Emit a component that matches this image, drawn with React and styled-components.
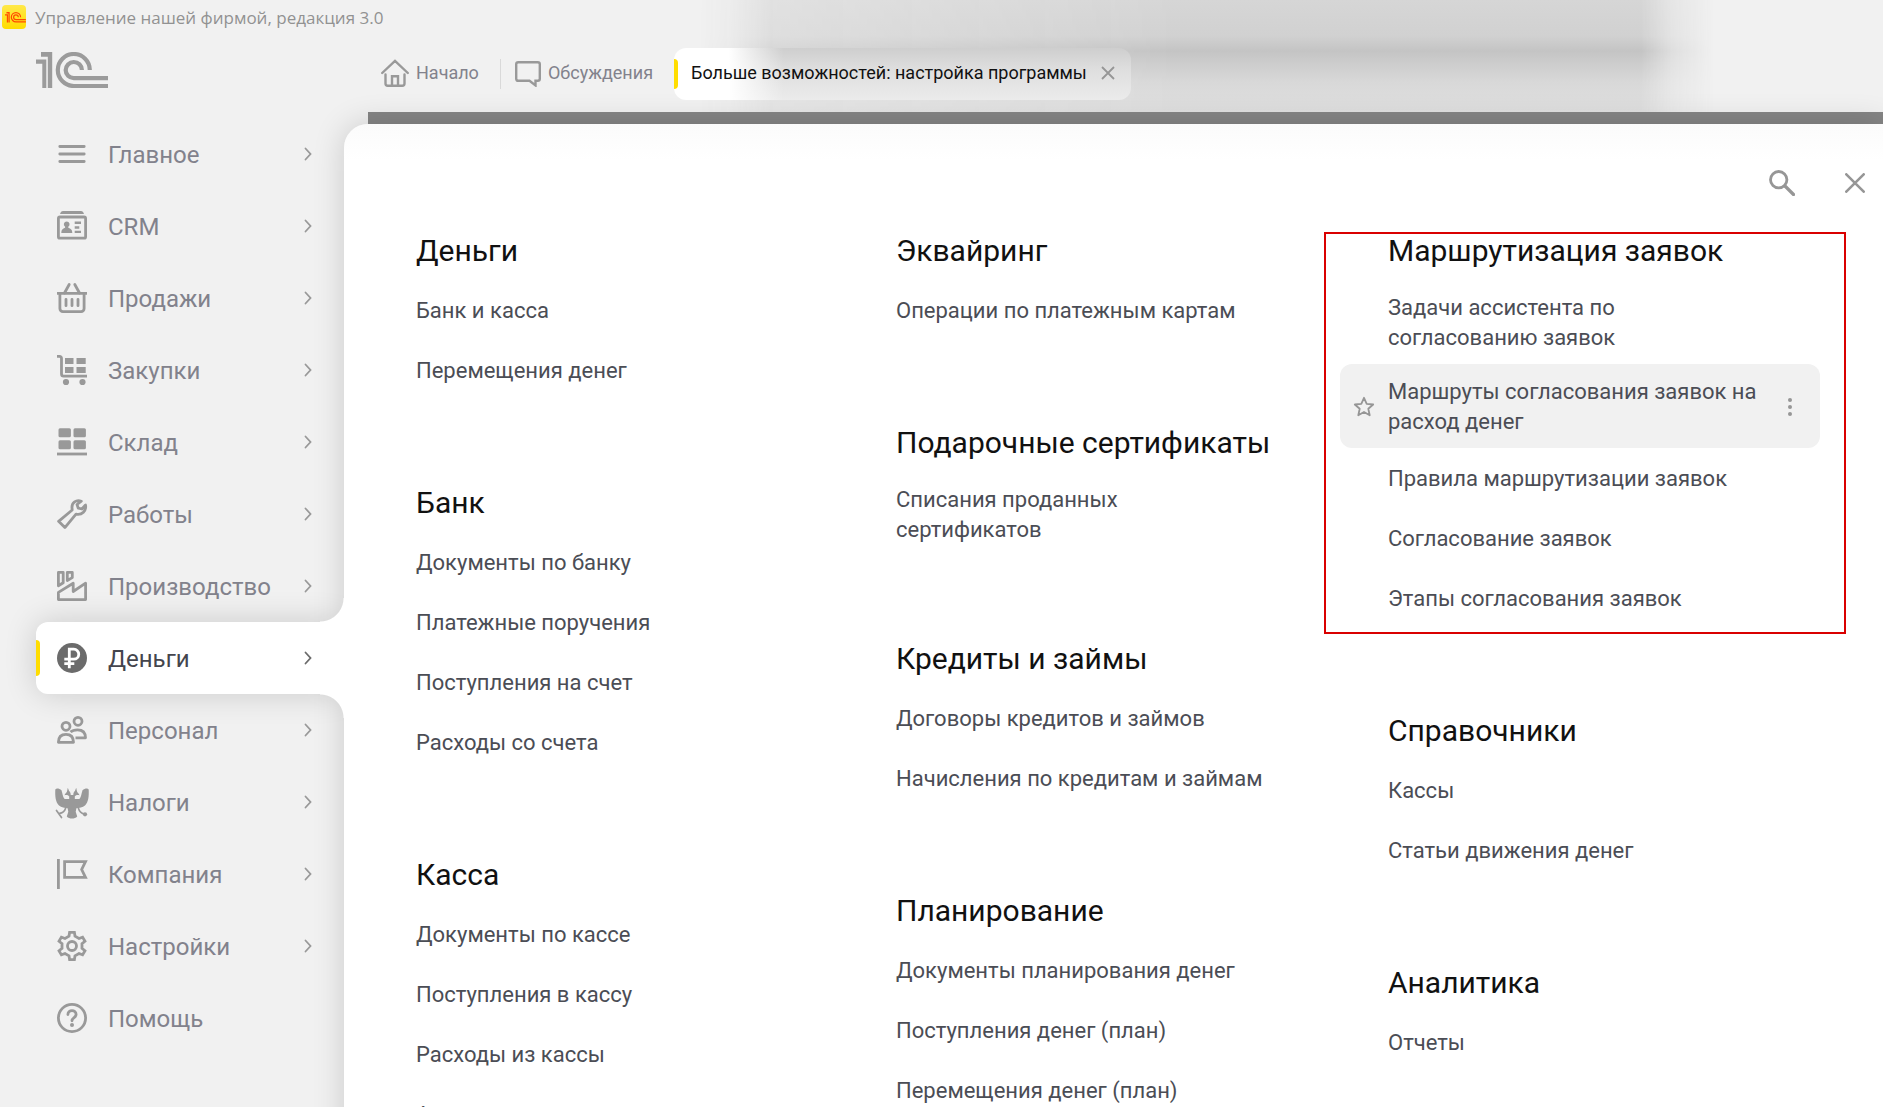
import React from 'react'
import styled, { createGlobalStyle, css } from 'styled-components'

const sections = [
    { title: 'Главное', icon: 'menu' },
    { title: 'CRM', icon: 'crm' },
    { title: 'Продажи', icon: 'basket' },
    { title: 'Закупки', icon: 'cart' },
    { title: 'Склад', icon: 'stock' },
    { title: 'Работы', icon: 'wrench' },
    { title: 'Производство', icon: 'factory' },
    { title: 'Деньги', icon: 'money', active: true },
    { title: 'Персонал', icon: 'people' },
    { title: 'Налоги', icon: 'eagle' },
    { title: 'Компания', icon: 'flag' },
    { title: 'Настройки', icon: 'gear' },
    { title: 'Помощь', icon: 'help', leaf: true },
]

const columns = [
    [
        { title: 'Деньги', items: ['Банк и касса', 'Перемещения денег'] },
        { title: 'Банк', items: ['Документы по банку', 'Платежные поручения', 'Поступления на счет', 'Расходы со счета'] },
        { title: 'Касса', items: ['Документы по кассе', 'Поступления в кассу', 'Расходы из кассы', 'Авансовые отчеты'] },
    ],
    [
        { title: 'Эквайринг', items: ['Операции по платежным картам'] },
        { title: 'Подарочные сертификаты', items: ['Списания проданных сертификатов'] },
        { title: 'Кредиты и займы', items: ['Договоры кредитов и займов', 'Начисления по кредитам и займам'] },
        { title: 'Планирование', items: ['Документы планирования денег', 'Поступления денег (план)', 'Перемещения денег (план)'] },
    ],
    [
        {
            title: 'Маршрутизация заявок',
            marked: true,
            current: 1,
            items: [
                'Задачи ассистента по согласованию заявок',
                'Маршруты согласования заявок на расход денег',
                'Правила маршрутизации заявок',
                'Согласование заявок',
                'Этапы согласования заявок',
            ],
        },
        { title: 'Справочники', items: ['Кассы', 'Статьи движения денег'] },
        { title: 'Аналитика', items: ['Отчеты'] },
    ],
]

// six-tooth cog around (15, 15)
function cogPath() {
    const pts = []
    for (let i = 0; i < 6; i++) {
        const a = (i * Math.PI) / 3
        const tooth = [[-3, 9.8], [-2.4, 13.6], [2.4, 13.6], [3, 9.8]]
        tooth.forEach(([x, r]) => {
            const px = 15 + x * Math.cos(a) + r * Math.sin(a)
            const py = 15 + x * Math.sin(a) - r * Math.cos(a)
            pts.push(`${px.toFixed(2)} ${py.toFixed(2)}`)
        })
    }
    return `M${pts.join('L')}Z`
}

const icons = {
    menu: <path d="M2.8 7.5h24.4M2.8 15h24.4M2.8 22.5h24.4" strokeLinecap="round" />,
    crm: (
        <>
            <path d="M3 3c.6-2 1.5-3 3-3h18c1.5 0 2.4 1 3 3z" className="fill" />
            <rect x="1.4" y="6" width="27.2" height="21.2" rx="1.5" />
            <path d="M9.7 10.5a2.9 2.9 0 0 1 1.6 5.3v1c2.5.7 4 1.9 4 5.2h-11c0-3.3 1.4-4.5 3.8-5.2v-1a2.9 2.9 0 0 1 1.6-5.3zM17.7 10.5H24V13h-6.300zM17.7 15.2h4.6v2.5h-4.6zM17.7 19.7H24v2.4h-6.3z" className="fill" />
        </>
    ),
    basket: (
        <>
            <path d="M0 10.4h30M2.9 10.4v15.2a3 3 0 0 0 3 3h18.2a3 3 0 0 0 3-3V10.4" />
            <path d="M7.5 10l4.7-8.5M22.5 10l-4.7-8.5M9 16.3v6.4M15 16.3v6.4M21 16.3v6.4" strokeLinecap="round" />
        </>
    ),
    cart: (
        <>
            <path d="M0 1.4h2.5q2 0 2 2V19q0 2.2 2.2 2.2H30" />
            <path d="M8 3h8.5v6H8zM19.5 3h9.2v6h-9.2zM8 12h8.5v6H8zM19.5 12h9.2v6h-9.2z" className="fill" />
            <circle cx="9" cy="27" r="3.1" className="fill" />
            <circle cx="25.5" cy="27" r="3.1" className="fill" />
        </>
    ),
    stock: (
        <>
            <g className="fill">
                <rect x="1.5" y="1.2" width="12.4" height="9" rx="1.5" />
                <rect x="16.5" y="1.2" width="12.4" height="9" rx="1.5" />
                <rect x="1.5" y="13.3" width="12.4" height="9" rx="1.5" />
                <rect x="16.5" y="13.3" width="12.4" height="9" rx="1.5" />
            </g>
            <path d="M0 27h30" />
        </>
    ),
    wrench: <path d="M24.3 2.2c-5-2-9.8 1.4-9.3 6.8l.2 2L1.6 22.3l6.3 6.3L19 15.2c6 1.3 10.6-3.6 9.5-9.2l-3.6 4-3.6-.8-1.3-3.7z" strokeLinejoin="round" />,
    factory: (
        <path
            d="M1.4 1.4h4.8v10.4l-4.8 3zM10.3 1.4h5v5.2l-5 2.9zM1.4 28.6v-7.2l14.8-9.1v8.2l12.4-8.3v16.4z"
            strokeLinejoin="round"
        />
    ),
    money: (
        <>
            <circle cx="15" cy="15" r="15" className="fill" />
            <path d="M12.3 25.3V6.200h4.5a4.9 4.9 0 0 1 0 9.9H7.3M7.3 20.6h10" stroke="#fff" />
        </>
    ),
    people: (
        <>
            <circle cx="9" cy="11.3" r="4" />
            <circle cx="21" cy="6.3" r="4" />
            <path d="M1.4 27.3c0-5.3 3-8 7.600-8s7.5 2.7 7.5 8z" strokeLinejoin="round" />
            <path d="M13.5 17c1.6-1.5 4-2.2 7-2.2 5 0 8 2.7 8 8h-10" strokeLinejoin="round" />
        </>
    ),
    eagle: (
        <>
            <path
                className="fill"
                d="M-1.7 2.5C-.5.8 2.500 1.7 4.5 3.200 5.8 7 5.6 10 7.6 12h4.6V9.500C11 8 9.8 8 7.5 8.200c.7-1.7 1.8-2.4 2.5-3.7L10.8.8l1.2 3c1.3 1.2 1.700 2.7 1.7 4.2h2.6c0-1.5.4-3 1.7-4.2l1.2-3 .8 3.700c.7 1.3 1.8 2 2.5 3.7-2.3-.2-3.5-.2-4.7 1.3V12h4.6c2-2 1.8-5 3.1-8.8 2-1.5 5-2.4 6.2-.7C32 9 31.6 15 28 18.500c-2.4 2.3-5.8 2.3-8.6 2.8l-.7 3.4 1.5 4.7c-2.4 2.8-8 2.8-10.4 0l1.5-4.7-.7-3.4c-2.8-.5-6.2-.5-8.6-2.8C-1.6 15-2 9-1.7 2.500z"
            />
            <path d="M-.5 23.5l5 7M8.5 21.5c-.8 2.5-2 4.5-6 4.8M21.5 21.5c.8 2.5 2 4.800 5.5 5.5" strokeWidth="1.7" strokeLinecap="round" />
            <circle cx="28" cy="27.3" r="2.1" className="fill" />
        </>
    ),
    flag: <path d="M1.4 0v30M7.6 2.7h20.9l-3.8 7.8 3.8 7.8H7.6z" />,
    gear: (
        <>
            <path d={cogPath()} />
            <circle cx="15" cy="15" r="4.5" />
        </>
    ),
    help: (
        <>
            <circle cx="15" cy="15" r="13.6" />
            <path d="M10.9 11.6c0-5.3 8.2-5.3 8.2 0 0 3-4.1 3-4.1 6.200" strokeLinecap="round" />
            <circle cx="15" cy="22" r="2" className="fill" />
        </>
    ),
}

function Mark1C() {
    return (
        <>
            <path d="M5 0h11.2v36h-4.4V4.8H5zM0 7.400h10.3V36h-4V11.8H0z" fill="currentColor" />
            <path d="M53.8 18a16 16 0 1 0-16 16H72M45.9 18a8.1 8.1 0 1 0-8.1 8.200H72" fill="none" stroke="currentColor" strokeWidth="4.2" />
        </>
    )
}

function Section({ title, items, marked, current }) {
    return (
        <Group $marked={marked}>
            <GroupTitle>{title}</GroupTitle>
            {items.map((item, i) => (
                <Command key={item} $current={i === current}>
                    {i === current && (
                        <StarButton type="button" aria-label="Добавить в избранное">
                            <svg width="22" height="22" viewBox="0 0 22 22">
                                <path d="M11 1.8l2.7 6 6.5.7-4.9 4.3 1.4 6.5L11 16l-5.7 3.3 1.4-6.5L1.8 8.500l6.5-.7z" fill="none" stroke="currentColor" strokeWidth="1.8" strokeLinejoin="round" />
                            </svg>
                        </StarButton>
                    )}
                    <CommandLink href="#">{item}</CommandLink>
                    {i === current && (
                        <DotsButton type="button" aria-label="Ещё">
                            <svg width="4" height="18" viewBox="0 0 4 18">
                                <g fill="currentColor">
                                    <circle cx="2" cy="2" r="2" />
                                    <circle cx="2" cy="9" r="2" />
                                    <circle cx="2" cy="16" r="2" />
                                </g>
                            </svg>
                        </DotsButton>
                    )}
                </Command>
            ))}
        </Group>
    )
}

export default function App() {
    return (
        <>
            <GlobalStyle />
            <Window>
                <TitleBar>
                    <AppBadge width="24" height="24" viewBox="0 0 24 24">
                        <defs>
                            <linearGradient id="badge" x1="0" y1="0" x2="0" y2="1">
                                <stop offset="0" stopColor="#ffe84a" />
                                <stop offset="1" stopColor="#ffdc00" />
                            </linearGradient>
                        </defs>
                        <rect width="24" height="24" rx="4" fill="url(#badge)" />
                        <g transform="translate(3 7) scale(.29)" strokeWidth="5">
                            <Mark1C />
                        </g>
                    </AppBadge>
                    Управление нашей фирмой, редакция 3.0
                </TitleBar>
                <Body>
                    <Sidebar>
                        <Logo width="72" height="36" viewBox="0 0 72 36">
                            <Mark1C />
                        </Logo>
                        <nav>
                            {sections.map(({ title, icon, active, leaf }) => (
                                <NavItem key={title} href="#" $active={active}>
                                    <NavIcon width="30" height="30" viewBox="0 0 30 30">{icons[icon]}</NavIcon>
                                    <NavLabel>{title}</NavLabel>
                                    {!leaf && (
                                        <svg width="10" height="16" viewBox="0 0 10 16">
                                            <path d="M2.5 2.5l5 5.5-5 5.5" fill="none" stroke="currentColor" strokeWidth="1.8" strokeLinecap="round" />
                                        </svg>
                                    )}
                                </NavItem>
                            ))}
                        </nav>
                    </Sidebar>
                    <Main>
                        <Tabs>
                            <Tab href="#">
                                <svg width="28" height="28" viewBox="0 0 28 28" fill="none" stroke="#999" strokeWidth="2.4">
                                    <path d="M1.2 14L14 1.8 26.8 14M4.500 15.5v9q0 2.200 2.2 2.2h14.6q2.200 0 2.2-2.2v-9M11 26.500v-9.300h6v9.3" strokeLinecap="round" />
                                </svg>
                                Начало
                            </Tab>
                            <Divider />
                            <Tab href="#">
                                <svg width="26" height="28" viewBox="0 0 26 28" fill="none" stroke="#999" strokeWidth="2.4">
                                    <path d="M3.2 3.200h19.6q2 0 2 2v14.6q0 2-2 2h-2.3v4.600l-6-4.600H3.200q-2 0-2-2V5.200q0-2 2-2z" />
                                </svg>
                                Обсуждения
                            </Tab>
                            <ActiveTab>
                                Больше возможностей: настройка программы
                                <IconButton type="button" aria-label="Закрыть вкладку">
                                    <svg width="14" height="14" viewBox="0 0 14 14">
                                        <path d="M1 1l12 12M13 1L1 13" stroke="currentColor" strokeWidth="1.8" />
                                    </svg>
                                </IconButton>
                            </ActiveTab>
                        </Tabs>
                        <Workspace>
                            <Panel>
                                <PanelTools>
                                    <IconButton type="button" aria-label="Поиск">
                                        <svg width="26" height="26" viewBox="0 0 26 26" fill="none" stroke="currentColor" strokeWidth="2.8">
                                            <circle cx="9.7" cy="9.7" r="8.2" />
                                            <path d="M16 16l8.5 8.5" strokeLinecap="round" strokeWidth="3.2" />
                                        </svg>
                                    </IconButton>
                                    <IconButton type="button" aria-label="Закрыть">
                                        <svg width="20" height="20" viewBox="0 0 20 20">
                                            <path d="M1.3 1.3l17.4 17.4M18.7 1.3L1.3 18.7" stroke="currentColor" strokeWidth="2.600" strokeLinecap="round" />
                                        </svg>
                                    </IconButton>
                                </PanelTools>
                                <Columns>
                                    {columns.map((groups, i) => (
                                        <Column key={i}>
                                            {groups.map(group => <Section key={group.title} {...group} />)}
                                        </Column>
                                    ))}
                                </Columns>
                            </Panel>
                        </Workspace>
                    </Main>
                </Body>
            </Window>
        </>
    )
}

const GlobalStyle = createGlobalStyle`
    * {
        box-sizing: border-box;
    }

    body {
        margin: 0;
        background: #f1f1f1;
        font-family: Roboto, "Liberation Sans", sans-serif;
    }

    a {
        color: inherit;
        text-decoration: none;
    }

    svg {
        display: block;
        flex: none;
    }
`

const Window = styled.div`
    display: flex;
    flex-direction: column;
    height: 100vh;
    overflow: hidden;
    position: relative;
    isolation: isolate;

    /* blurred backdrop showing through the window header */
    &::before {
        content: "";
        position: absolute;
        z-index: -1;
        top: 0;
        left: 36%;
        right: 9%;
        height: 112px;
        background: linear-gradient(180deg, #d6d6d6 0, #d1d1d1 36px, #c4c4c4 51px, #cdcdcd 64px, #d8d8d8 82px, #e0e0e0 112px);
        mask-image: linear-gradient(90deg, transparent 2%, rgba(0, 0, 0, .15) 5%, rgba(0, 0, 0, .6) 9%, rgba(0, 0, 0, .75) 24%, #000 48%, #000 93%, rgba(0, 0, 0, .4) 96%, transparent);
    }
`

const TitleBar = styled.header`
    display: flex;
    align-items: center;
    gap: 9px;
    height: 36px;
    padding: 0 0 2px 2px;
    color: #929292;
    font: 17px "Open Sans", "Noto Sans", sans-serif;
`

const AppBadge = styled.svg`
    color: #ff4a00;
`

const Body = styled.div`
    display: grid;
    grid-template-columns: 344px 1fr;
    flex: 1;
    min-height: 0;
`

const Sidebar = styled.aside`
    position: relative;
    z-index: 1;
    padding: 16px 0 0 36px;
`

const Logo = styled.svg`
    margin-bottom: 30px;
    color: #9b9b9b;
`

const NavItem = styled.a`
    position: relative;
    display: flex;
    align-items: center;
    height: 72px;
    padding: 0 31px 0 21px;
    border-radius: 12px 0 0 12px;
    color: #999;

    ${({ $active }) => $active && css`
        background: #fff;
        color: #6b6b6b;
        box-shadow: 0 0 32px rgba(0, 0, 0, .16);
        clip-path: inset(-48px 0 -48px -36px);

        span {
            color: #44454d;
        }

        &::before {
            content: "";
            position: absolute;
            left: 0;
            top: 18px;
            bottom: 18px;
            width: 4px;
            border-radius: 0 4px 4px 0;
            background: #ffdd00;
        }

        /* inverse corners that join the row with the panel */
        &::after {
            content: "";
            position: absolute;
            right: 0;
            top: -24px;
            bottom: -24px;
            width: 24px;
            background:
                radial-gradient(circle at 0 0, transparent 23px, #fff 24px) top / 24px 24px no-repeat,
                radial-gradient(circle at 0 100%, transparent 23px, #fff 24px) bottom / 24px 24px no-repeat;
        }
    `}
`

const NavIcon = styled.svg`
    overflow: visible;
    fill: none;
    stroke: currentColor;
    stroke-width: 2.8;

    .fill {
        fill: currentColor;
        stroke: none;
    }
`

const NavLabel = styled.span`
    flex: 1;
    padding: 2px 0 0 21px;
    color: #82828c;
    font-size: 24px;
`

const Main = styled.main`
    display: flex;
    flex-direction: column;
    min-width: 0;
`

const Tabs = styled.div`
    display: flex;
    align-items: center;
    height: 76px;
    padding-left: 37px;
    white-space: nowrap;
    font-size: 18px;
`

const Tab = styled.a`
    display: flex;
    align-items: center;
    gap: 7px;
    padding-bottom: 3px;
    color: #82828c;
`

const Divider = styled.span`
    width: 1px;
    height: 30px;
    margin: 0 14px 0 21px;
    background: #d9d9d9;
`

const ActiveTab = styled.div`
    position: relative;
    display: flex;
    align-items: center;
    gap: 14px;
    height: 52px;
    margin-left: 21px;
    padding: 0 16px 3px 17px;
    border-radius: 12px;
    background:
        linear-gradient(90deg, #fff 12%, rgba(255, 255, 255, 0) 24%),
        linear-gradient(180deg, #cecece, #dedede 40%, #ebebeb);
    color: #111;

    &::before {
        content: "";
        position: absolute;
        left: 0;
        top: 11px;
        bottom: 11px;
        width: 4px;
        border-radius: 0 4px 4px 0;
        background: #ffdd00;
    }
`

const IconButton = styled.button`
    padding: 0;
    border: 0;
    background: none;
    color: #969696;
`

const Workspace = styled.div`
    display: flex;
    flex: 1;
    min-height: 0;
    margin-left: 24px;
    padding-top: 12px;
    background: #858585;
`

const Panel = styled.section`
    flex: 1;
    margin-left: -24px;
    border-radius: 24px 0 0 0;
    background: linear-gradient(180deg, #fbfbfb, #fff 36px);
    box-shadow: 0 0 32px rgba(0, 0, 0, .16);
`

const PanelTools = styled.div`
    display: flex;
    justify-content: flex-end;
    align-items: center;
    gap: 50px;
    height: 96px;
    padding: 22px 18px 0 0;
`

const Columns = styled.div`
    display: grid;
    grid-template-columns: 40fr 41fr 40fr;
    padding: 0 63px 0 24px;
`

const Column = styled.div`
    display: flex;
    flex-direction: column;
    gap: 72px;
    min-width: 0;
`

const Group = styled.section`
    position: relative;

    ${({ $marked }) => $marked && css`
        &::after {
            content: "";
            position: absolute;
            inset: 12px -26px -6px -16px;
            border: 2px solid #d90000;
            pointer-events: none;
        }
    `}
`

const GroupTitle = styled.h2`
    margin: 0;
    padding: 2px 0 0 48px;
    color: #111;
    font-size: 30px;
    font-weight: 400;
    line-height: 58px;
`

const Command = styled.div`
    display: flex;
    align-items: center;
    max-width: 480px;
    min-height: 60px;
    padding: 13px 28px 11px 48px;
    border-radius: 12px;
    background: ${({ $current }) => ($current ? '#f1f1f1' : 'none')};
    color: #4b4d55;
`

const CommandLink = styled.a`
    flex: 1;
    max-width: 370px;
    font-size: 22px;
    line-height: 30px;
`

const StarButton = styled(IconButton)`
    width: 22px;
    margin: 0 13px 0 -35px;
`

const DotsButton = styled(IconButton)`
    width: 4px;
    margin-left: auto;
`
